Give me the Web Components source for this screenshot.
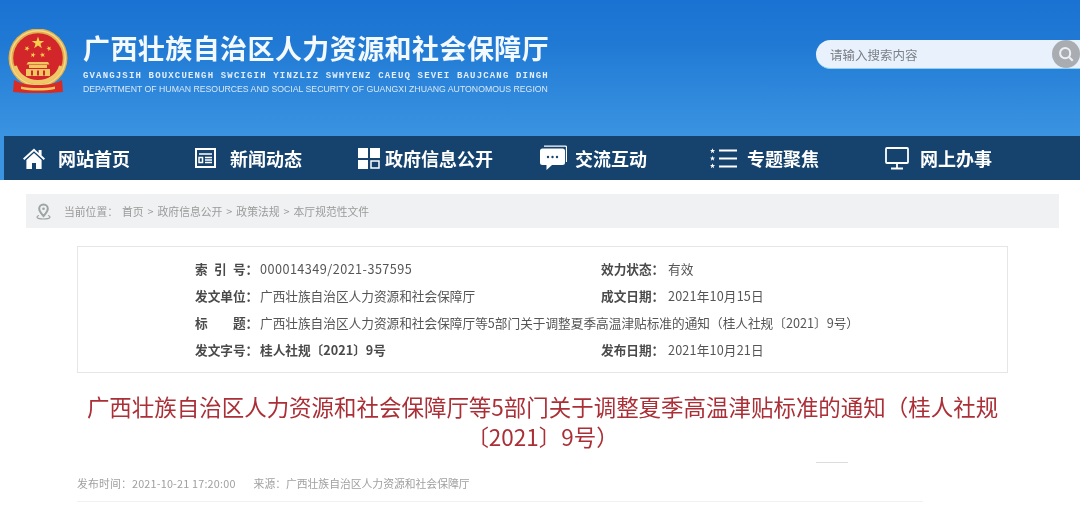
<!DOCTYPE html>
<html lang="zh-CN">
<head>
<meta charset="utf-8">
<title>广西壮族自治区人力资源和社会保障厅</title>
<style>
  html, body { margin: 0; background: #fff; }
  body {
    width: 1080px;
    height: 507px;
    overflow: hidden;
    font-family: "Noto Sans CJK SC", "Liberation Sans", sans-serif;
    filter: blur(.35px);
  }
</style>
</head>
<body>
<gx-top>
  <gx-brand slot="brand"></gx-brand>
  <gx-search slot="search" placeholder="请输入搜索内容"></gx-search>
  <gx-nav slot="nav">
    <gx-nav-item icon="home" label="网站首页" style="--w:172px;--gap:13px"></gx-nav-item>
    <gx-nav-item icon="news" label="新闻动态" style="--w:163px;--gap:14px"></gx-nav-item>
    <gx-nav-item icon="grid" label="政府信息公开" style="--w:182px;--gap:5px"></gx-nav-item>
    <gx-nav-item icon="chat" label="交流互动" style="--w:170px;--gap:8px"></gx-nav-item>
    <gx-nav-item icon="list" label="专题聚焦" style="--w:175px;--gap:10px"></gx-nav-item>
    <gx-nav-item icon="screen" label="网上办事" style="--w:140px;--gap:11px"></gx-nav-item>
  </gx-nav>
</gx-top>
<gx-crumbs>
  <span>当前位置：</span><span>首页</span><i>&gt;</i><span>政府信息公开</span><i>&gt;</i><span>政策法规</span><i>&gt;</i><span>本厅规范性文件</span>
</gx-crumbs>
<gx-info>
  <gx-field label="索&ensp;引&ensp;号：" style="--track:.45px">000014349/2021-357595</gx-field>
  <gx-field label="效力状态：">有效</gx-field>
  <gx-field label="发文单位：">广西壮族自治区人力资源和社会保障厅</gx-field>
  <gx-field label="成文日期：" style="--track:.15px">2021年10月15日</gx-field>
  <gx-field label="标&emsp;&emsp;题：" wide>广西壮族自治区人力资源和社会保障厅等5部门关于调整夏季高温津贴标准的通知（桂人社规〔2021〕9号）</gx-field>
  <gx-field label="发文字号：" strong>桂人社规〔2021〕9号</gx-field>
  <gx-field label="发布日期：" style="--track:.15px">2021年10月21日</gx-field>
</gx-info>
<gx-article-head>
  广西壮族自治区人力资源和社会保障厅等5部门关于调整夏季高温津贴标准的通知（桂人社规〔2021〕9号）
  <span slot="time">发布时间：2021-10-21 17:20:00</span>
  <span slot="source">来源：广西壮族自治区人力资源和社会保障厅</span>
</gx-article-head>

<script>
const star = (cx, cy, r, rot = -90) => {
  let d = '';
  for (let i = 0; i < 10; i++) {
    const a = (rot + i * 36) * Math.PI / 180;
    const l = i % 2 ? r * 0.4 : r;
    d += (i ? 'L' : 'M') + (cx + l * Math.cos(a)).toFixed(2) + ' ' + (cy + l * Math.sin(a)).toFixed(2);
  }
  return d + 'Z';
};

const navIcons = {
  home: `<svg width="22" height="21" viewBox="0 0 22 21"><path fill="#fff" d="M11 .5 0 10.500l1.300 1.500L11 3.300l9.700 8.700L22 10.500l-3.400-3V2h-3v3z"/><path fill="#fff" d="M11 5 3.400 12V21h5.600v-6h4v6h5.600v-9z"/></svg>`,
  news: `<svg width="21" height="20" viewBox="0 0 21 20" fill="none" stroke="#fff"><rect x="1" y="1" width="19" height="18" stroke-width="2"/><path stroke-width="1.500" d="M4 6h13M4 9.500h3.500v5H4zM10 9.500h7M10 12h7M10 14.600h7"/></svg>`,
  grid: `<svg width="22" height="21" viewBox="0 0 22 21"><path fill="#fff" d="M0 0h10v10H0zM12 0h10v10H12zM0 12h10v9H0z"/><rect x="13" y="13" width="8" height="7" fill="none" stroke="#fff" stroke-width="1.500"/></svg>`,
  chat: `<svg width="27" height="26" viewBox="0 0 27 26"><path fill="none" stroke="#fff" stroke-width="1.200" d="M4 1.200h21.500a1 1 0 0 1 1 1V17"/><path fill="#fff" d="M2.500 3.500h20a2.500 2.500 0 0 1 2.500 2.500v11.500a2.500 2.500 0 0 1-2.500 2.500H12l-5.500 5V20h-4A2.500 2.500 0 0 1 0 17.500V6a2.500 2.500 0 0 1 2.500-2.500z"/><circle cx="8" cy="12" r="1.200" fill="#16436e"/><circle cx="12.500" cy="12" r="1.200" fill="#16436e"/><circle cx="17" cy="12" r="1.200" fill="#16436e"/></svg>`,
  list: `<svg width="27" height="21" viewBox="0 0 27 21"><path fill="#fff" d="${star(2.500, 3, 2.800)}${star(2.500, 10.500, 2.800)}${star(2.500, 18, 2.800)}"/><path stroke="#fff" stroke-width="2" d="M9 2.500h18M9 10.500h18M9 18.500h18"/></svg>`,
  screen: `<svg width="24" height="23" viewBox="0 0 24 23" fill="none" stroke="#fff" stroke-width="1.800"><rect x="1" y="1" width="22" height="15" rx="1"/><path d="M12 16v5M6 21.500h12"/></svg>`,
};

class GxTop extends HTMLElement {
  constructor() {
    super();
    this.attachShadow({ mode: 'open' });
    this.shadowRoot.innerHTML = `
      <style>
        :host { display: block; height: 180px; background: linear-gradient(#1a72d2 0, #1f79d4 40px, #3b94e1 136px); }
        .head { display: flex; justify-content: space-between; height: 136px; }
        .bar { margin-left: 4px; }
      </style>
      <div class="head"><slot name="brand"></slot><slot name="search"></slot></div>
      <div class="bar"><slot name="nav"></slot></div>`;
  }
}

class GxBrand extends HTMLElement {
  constructor() {
    super();
    this.attachShadow({ mode: 'open' });
    this.shadowRoot.innerHTML = `
      <style>
        :host { display: flex; padding: 29px 0 0 8px; color: #fff; }
        svg { display: block; flex: none; }
        .text { margin-left: 15px; padding-top: 2px; width: 470px; white-space: nowrap; }
        h1 { margin: 0; font: 700 27px/34px "Noto Sans CJK SC", sans-serif; letter-spacing: .42px; color: #f4f9fe; }
        .zh { margin-top: 5px; font: 700 9px/13px "Liberation Mono", monospace; letter-spacing: 1.16px; color: #e3eefa; }
        .en { margin-top: 0; font: 8.720px/12px "Liberation Sans", sans-serif; color: #d9e8f8; }
      </style>
      <svg width="60" height="64" viewBox="0 0 60 64">
        <circle cx="30" cy="29" r="29.500" fill="#e3b04b"/>
        <circle cx="30" cy="29" r="27.300" fill="none" stroke="#f3d98a" stroke-width="1.500"/>
        <circle cx="30" cy="29" r="24.800" fill="#d3262a"/>
        <path fill="#f6d04d" d="${star(30, 14, 6.500)}${star(19, 19.500, 2.800, -60)}${star(25, 26, 2.800, -75)}${star(34.500, 26, 2.800, -105)}${star(41, 19.500, 2.800, -120)}"/>
        <path fill="#f0c661" d="M20 33h20l1.500 2.500h-23zM21 36h18v3h-18zM18 40h24v7H18z"/>
        <path fill="#d3262a" d="M23 41.500h2v5h-2zM29 41.500h2v5h-2zM35 41.500h2v5h-2z"/>
        <path fill="none" stroke="#efc766" stroke-width="4" d="M7 37c3 10 12 16 23 16s20-6 23-16"/>
        <path fill="#d92b26" d="M6 51c7 4 15 5 24 5s17-1 24-5l1 12c-8 1-17 1-25 1s-17 0-25-1z"/>
        <path fill="#f0c661" d="M13 57.500c5 1 11 1.500 17 1.500s12-.5 17-1.500v2.500c-5 1-11 1.500-17 1.500s-12-.5-17-1.500z"/>
      </svg>
      <div class="text">
        <h1>广西壮族自治区人力资源和社会保障厅</h1>
        <div class="zh">GVANGJSIH BOUXCUENGH SWCIGIH YINZLIZ SWHYENZ CAEUQ SEVEI BAUJCANG DINGH</div>
        <div class="en">DEPARTMENT OF HUMAN RESOURCES AND SOCIAL SECURITY OF GUANGXI ZHUANG AUTONOMOUS REGION</div>
      </div>`;
  }
}

class GxSearch extends HTMLElement {
  constructor() {
    super();
    this.attachShadow({ mode: 'open' });
  }

  connectedCallback() {
    this.shadowRoot.innerHTML = `
      <style>
        :host { display: block; width: 264px; margin-top: 40px; }
        .box {
          display: flex; align-items: center; justify-content: space-between;
          height: 29px; box-sizing: border-box; padding-left: 14px;
          border-radius: 15px 0 0 15px; background: #e9f2fc;
          border-bottom: 1px solid #8ed3ee;
        }
        span { font-size: 12.500px; color: #7c7f85; }
        .btn { width: 28px; height: 28px; border-radius: 50%; background: #a9adb2; display: flex; align-items: center; justify-content: center; }
      </style>
      <div class="box">
        <span>${this.getAttribute('placeholder')}</span>
        <div class="btn">
          <svg width="16" height="16" viewBox="0 0 19 19" fill="none" stroke="#edf1f5" stroke-width="2.400"><circle cx="8.500" cy="8.500" r="6"/><path d="m13 13 4.500 4.500"/></svg>
        </div>
      </div>`;
  }
}

class GxNav extends HTMLElement {
  constructor() {
    super();
    this.attachShadow({ mode: 'open' });
    this.shadowRoot.innerHTML = `
      <style>
        :host {
          display: flex; height: 44px; box-sizing: border-box; padding-left: 19px;
          background: #16436e;
        }
      </style>
      <slot></slot>`;
  }
}

class GxNavItem extends HTMLElement {
  constructor() {
    super();
    this.attachShadow({ mode: 'open' });
  }

  connectedCallback() {
    this.shadowRoot.innerHTML = `
      <style>
        :host { display: flex; align-items: center; width: var(--w); gap: var(--gap); color: #fff; }
        svg { display: block; flex: none; }
        span { font-size: 18px; font-weight: 700; line-height: 44px; white-space: nowrap; }
      </style>
      ${navIcons[this.getAttribute('icon')]}
      <span>${this.getAttribute('label')}</span>`;
  }
}

class GxCrumbs extends HTMLElement {
  constructor() {
    super();
    this.attachShadow({ mode: 'open' });
    this.shadowRoot.innerHTML = `
      <style>
        :host {
          display: flex; align-items: center; gap: 4px;
          width: 1033px; height: 34px; margin: 14px 0 0 26px; padding-left: 9px; box-sizing: border-box;
          background: #eff1f3; color: #9a9a9a; font-size: 10.800px;
        }
        svg { margin-right: 8px; flex: none; }
        ::slotted(i) { font-style: normal; }
      </style>
      <svg width="17" height="17" viewBox="0 0 17 17" fill="none" stroke="#9ea3a3">
        <path stroke-width="2" d="M8.500 1.500a4.300 4.300 0 0 1 4.300 4.300c0 2.700-2.500 5-4.300 7.200-1.800-2.200-4.300-4.500-4.300-7.200a4.300 4.300 0 0 1 4.300-4.300z"/>
        <circle cx="8.500" cy="5.800" r="1.300" fill="#9ea3a3" stroke="none"/>
        <path stroke-width="1.200" d="M4 12.500C1 13.500.8 15.800 8.500 16c7.700-.2 7.500-2.500 4.500-3.500"/>
      </svg>
      <slot></slot>`;
  }
}

class GxInfo extends HTMLElement {
  constructor() {
    super();
    this.attachShadow({ mode: 'open' });
    this.shadowRoot.innerHTML = `
      <style>
        :host {
          display: grid; grid-template-columns: 65px 341px 67px 1fr; grid-auto-rows: 27px; align-items: center;
          width: 931px; height: 127px; box-sizing: border-box; margin: 18px 0 0 77px;
          padding: 8px 0 0 117px; border: 1px solid #e6e6e6;
          color: #555; font-size: 12.660px;
        }
      </style>
      <slot></slot>`;
  }
}

class GxField extends HTMLElement {
  constructor() {
    super();
    this.attachShadow({ mode: 'open' });
  }

  connectedCallback() {
    this.shadowRoot.innerHTML = `
      <style>
        :host { display: contents; }
        b { font-weight: 700; color: #4a4a4a; white-space: nowrap; }
        span { white-space: nowrap; letter-spacing: var(--track, 0); }
        .wide { grid-column: 2 / 5; }
        .strong { font-weight: 700; color: #4a4a4a; }
      </style>
      <b>${this.getAttribute('label')}</b>
      <span class="${this.hasAttribute('wide') ? 'wide' : ''} ${this.hasAttribute('strong') ? 'strong' : ''}"><slot></slot></span>`;
  }
}

class GxArticleHead extends HTMLElement {
  constructor() {
    super();
    this.attachShadow({ mode: 'open' });
    this.shadowRoot.innerHTML = `
      <style>
        :host { display: block; width: 931px; margin: 18px 0 0 77px; }
        h2 { margin: 0; font-size: 22.470px; font-weight: 400; line-height: 30px; text-align: center; color: #ab2f36; }
        .tick { width: 32px; height: 1px; margin: 11px 0 0 739px; background: #dcdcdc; }
        .meta {
          display: flex; gap: 18px; width: 846px; height: 39px; box-sizing: border-box; padding-top: 11px;
          font-size: 10.800px; line-height: 18px; color: #a0a0a0; border-bottom: 1px solid #f1f1f1;
        }
        ::slotted([slot="time"]) { letter-spacing: .2px; }
      </style>
      <h2><slot></slot></h2>
      <div class="tick"></div>
      <div class="meta"><slot name="time"></slot><slot name="source"></slot></div>`;
  }
}

customElements.define('gx-top', GxTop);
customElements.define('gx-brand', GxBrand);
customElements.define('gx-search', GxSearch);
customElements.define('gx-nav', GxNav);
customElements.define('gx-nav-item', GxNavItem);
customElements.define('gx-crumbs', GxCrumbs);
customElements.define('gx-info', GxInfo);
customElements.define('gx-field', GxField);
customElements.define('gx-article-head', GxArticleHead);
</script>
</body>
</html>
